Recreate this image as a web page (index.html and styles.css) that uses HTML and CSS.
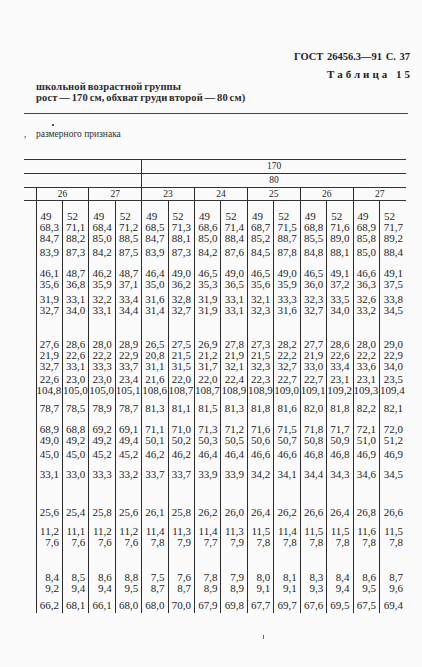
FILE: index.html
```html
<!DOCTYPE html>
<html lang="ru">
<head>
<meta charset="utf-8">
<title>ГОСТ 26456.3—91 С. 37</title>
<link rel="stylesheet" href="styles.css">
</head>
<body>
<div class="page">
  <div class="gost">ГОСТ 26456.3—91 С. 37</div>
  <div class="tabl">Таблица <b>15</b></div>
  <div class="title">школьной возрастной группы<br>рост — 170 см, обхват груди второй — 80 см)</div>
  <div class="rule"></div>
  <div class="specks"><span class="dot"></span></div>
  <div class="note"><span class="comma">,</span>размерного признака</div>
  <table class="data">
    <colgroup>
      <col class="stub"><col><col><col><col><col><col><col><col><col><col><col><col><col><col>
    </colgroup>
    <tr class="h h1"><td colspan="5" class="hl"></td><td colspan="10">170</td></tr>
    <tr class="h h2"><td colspan="5" class="hl"></td><td colspan="10">80</td></tr>
    <tr class="h h3"><td class="s"></td><td colspan="2" class="g">26</td><td colspan="2" class="g">27</td><td colspan="2" class="g">23</td><td colspan="2" class="g">24</td><td colspan="2" class="g">25</td><td colspan="2" class="g">26</td><td colspan="2" class="g">27</td></tr>
    <tr class="p10"><td class="s"></td>
      <td><span class="l">49</span>68,3<br>84,7</td><td><span class="l">52</span>71,1<br>88,2</td>
      <td><span class="l">49</span>68,4<br>85,0</td><td><span class="l">52</span>71,2<br>88,5</td>
      <td><span class="l">49</span>68,5<br>84,7</td><td><span class="l">52</span>71,3<br>88,1</td>
      <td><span class="l">49</span>68,6<br>85,0</td><td><span class="l">52</span>71,4<br>88,4</td>
      <td><span class="l">49</span>68,7<br>85,2</td><td><span class="l">52</span>71,5<br>88,7</td>
      <td><span class="l">49</span>68,8<br>85,5</td><td><span class="l">52</span>71,6<br>89,0</td>
      <td><span class="l">49</span>68,9<br>85,8</td><td><span class="l">52</span>71,7<br>89,2</td></tr>
    <tr class="p3"><td class="s"></td><td>83,9</td><td>87,3</td><td>84,2</td><td>87,5</td><td>83,9</td><td>87,3</td><td>84,2</td><td>87,6</td><td>84,5</td><td>87,8</td><td>84,8</td><td>88,1</td><td>85,0</td><td>88,4</td></tr>
    <tr class="p10"><td class="s"></td><td>46,1<br>35,6</td><td>48,7<br>36,8</td><td>46,2<br>35,9</td><td>48,7<br>37,1</td><td>46,4<br>35,0</td><td>49,0<br>36,2</td><td>46,5<br>35,3</td><td>49,0<br>36,5</td><td>46,5<br>35,6</td><td>49,0<br>35,9</td><td>46,5<br>36,0</td><td>49,1<br>37,2</td><td>46,6<br>36,3</td><td>49,1<br>37,5</td></tr>
    <tr class="p4"><td class="s"></td><td>31,9<br>32,7</td><td>33,1<br>34,0</td><td>32,2<br>33,1</td><td>33,4<br>34,4</td><td>31,6<br>31,4</td><td>32,8<br>32,7</td><td>31,9<br>31,9</td><td>33,1<br>33,1</td><td>32,1<br>32,3</td><td>33,3<br>31,6</td><td>32,3<br>32,7</td><td>33,5<br>34,0</td><td>32,6<br>33,2</td><td>33,8<br>34,5</td></tr>
    <tr class="p23"><td class="s"></td><td>27,6<br>21,9<br>32,7</td><td>28,6<br>22,6<br>33,1</td><td>28,0<br>22,2<br>33,3</td><td>28,9<br>22,9<br>33,7</td><td>26,5<br>20,8<br>31,1</td><td>27,5<br>21,5<br>31,5</td><td>26,9<br>21,2<br>31,7</td><td>27,8<br>21,9<br>32,1</td><td>27,3<br>21,5<br>32,3</td><td>28,2<br>22,2<br>32,7</td><td>27,7<br>21,9<br>33,0</td><td>28,6<br>22,6<br>33,4</td><td>28,0<br>22,2<br>33,6</td><td>29,0<br>22,9<br>34,0</td></tr>
    <tr class="p2"><td class="s"></td><td>22,6<br>104,8</td><td>23,0<br>105,0</td><td>23,0<br>105,0</td><td>23,4<br>105,1</td><td>21,6<br>108,6</td><td>22,0<br>108,7</td><td>22,0<br>108,7</td><td>22,4<br>108,9</td><td>22,3<br>108,9</td><td>22,7<br>109,0</td><td>22,7<br>109,1</td><td>23,1<br>109,2</td><td>23,1<br>109,3</td><td>23,5<br>109,4</td></tr>
    <tr class="p7"><td class="s"></td><td>78,7</td><td>78,5</td><td>78,9</td><td>78,7</td><td>81,3</td><td>81,1</td><td>81,5</td><td>81,3</td><td>81,8</td><td>81,6</td><td>82,0</td><td>81,8</td><td>82,2</td><td>82,1</td></tr>
    <tr class="p10"><td class="s"></td><td>68,9<br>49,0</td><td>68,8<br>49,2</td><td>69,2<br>49,2</td><td>69,1<br>49,4</td><td>71,1<br>50,1</td><td>71,0<br>50,2</td><td>71,3<br>50,3</td><td>71,2<br>50,5</td><td>71,6<br>50,6</td><td>71,5<br>50,7</td><td>71,8<br>50,8</td><td>71,7<br>50,9</td><td>72,1<br>51,0</td><td>72,0<br>51,2</td></tr>
    <tr class="p3"><td class="s"></td><td>45,0</td><td>45,0</td><td>45,2</td><td>45,2</td><td>46,2</td><td>46,2</td><td>46,4</td><td>46,4</td><td>46,6</td><td>46,6</td><td>46,8</td><td>46,8</td><td>46,9</td><td>46,9</td></tr>
    <tr class="p9"><td class="s"></td><td>33,1</td><td>33,0</td><td>33,3</td><td>33,2</td><td>33,7</td><td>33,7</td><td>33,9</td><td>33,9</td><td>34,2</td><td>34,1</td><td>34,4</td><td>34,3</td><td>34,6</td><td>34,5</td></tr>
    <tr class="p27"><td class="s"></td><td>25,6</td><td>25,4</td><td>25,8</td><td>25,6</td><td>26,1</td><td>25,8</td><td>26,2</td><td>26,0</td><td>26,4</td><td>26,2</td><td>26,6</td><td>26,4</td><td>26,8</td><td>26,6</td></tr>
    <tr class="p8"><td class="s"></td><td>11,2<br>7,6</td><td>11,1<br>7,6</td><td>11,2<br>7,6</td><td>11,2<br>7,6</td><td>11,4<br>7,8</td><td>11,3<br>7,9</td><td>11,4<br>7,7</td><td>11,3<br>7,9</td><td>11,5<br>7,8</td><td>11,4<br>7,8</td><td>11,5<br>7,8</td><td>11,5<br>7,8</td><td>11,6<br>7,8</td><td>11,5<br>7,8</td></tr>
    <tr class="p24"><td class="s"></td><td>8,4<br>9,2</td><td>8,5<br>9,4</td><td>8,6<br>9,4</td><td>8,8<br>9,5</td><td>7,5<br>8,7</td><td>7,6<br>8,7</td><td>7,8<br>8,9</td><td>7,9<br>8,9</td><td>8,0<br>9,1</td><td>8,1<br>9,1</td><td>8,3<br>9,3</td><td>8,4<br>9,4</td><td>8,6<br>9,5</td><td>8,7<br>9,6</td></tr>
    <tr class="p6 last"><td class="s"></td><td>66,2</td><td>68,1</td><td>66,1</td><td>68,0</td><td>68,0</td><td>70,0</td><td>67,9</td><td>69,8</td><td>67,7</td><td>69,7</td><td>67,6</td><td>69,5</td><td>67,5</td><td>69,4</td></tr>
  </table>
  <div class="foot"><span class="tick"></span></div>
</div>
</body>
</html>
```
FILE: styles.css
```css
html, body {
  margin: 0;
  padding: 0;
  background: #fbfbfb;
}
body {
  font-family: "Liberation Serif", "DejaVu Serif", serif;
  color: #1e1e1e;
}
.page {
  width: 422px;
  height: 667px;
  box-sizing: border-box;
  padding: 50px 14px 0 24px;
  overflow: hidden;
}
.gost {
  text-align: right;
  font-size: 10.5px;
  font-weight: bold;
  line-height: 14px;
  word-spacing: 1px;
  margin-right: -2px;
}
.tabl {
  margin-top: 3px;
  text-align: right;
  font-size: 11px;
  line-height: 14px;
  letter-spacing: 3px;
  margin-right: -5px;
  font-weight: 600;
}
.title {
  padding-left: 12px;
  font-size: 10.5px;
  font-weight: bold;
  line-height: 11px;
  letter-spacing: 0.15px;
  word-spacing: -1px;
  color: #2a2a2a;
}
.rule {
  margin-top: 10px;
  border-top: 1.5px solid #444;
}
.specks {
  height: 14px;
  position: relative;
}
.dot {
  position: absolute;
  left: 28px;
  top: 10px;
  width: 2px;
  height: 2px;
  background: #555;
}
.note {
  position: relative;
  padding-left: 12px;
  font-size: 9.5px;
  line-height: 12px;
  color: #2e2e2e;
}
.comma {
  position: absolute;
  left: 0;
  top: 0;
}
.data {
  margin-top: 19px;
  width: 382px;
  table-layout: fixed;
  border-collapse: collapse;
  font-size: 11px;
  line-height: 11px;
}
.data col.stub { width: 12px; }
.data td {
  padding: 0 3px 0 0;
  text-align: right;
  white-space: nowrap;
  border-left: 1px solid #2a2a2a;
  vertical-align: top;
  overflow: visible;
}
.data td.s { border-left: none; }
.data tr.h td {
  border-top: 1.5px solid #333;
  border-bottom: 1.5px solid #333;
  text-align: center;
  vertical-align: middle;
  font-size: 9.5px;
  padding: 0;
}
.data tr.h td.hl {
  border-left: none;
  border-right: 1px solid #333;
}
.data tr.h1 td { height: 13px; }
.data tr.h2 td { height: 13px; }
.data tr.h3 td { height: 12px; }
.data .l {
  display: block;
  text-align: left;
  padding-left: 4px;
}
.data tr.p2 td { padding-top: 2px; }
.data tr.p3 td { padding-top: 3px; }
.data tr.p4 td { padding-top: 4px; }
.data tr.p6 td { padding-top: 6px; }
.data tr.p7 td { padding-top: 7px; }
.data tr.p8 td { padding-top: 8px; }
.data tr.p9 td { padding-top: 9px; }
.data tr.p10 td { padding-top: 10px; }
.data tr.p23 td { padding-top: 23px; }
.data tr.p24 td { padding-top: 24px; }
.data tr.p27 td { padding-top: 27px; }
.data tr.last td { padding-bottom: 2px; }
.foot {
  position: relative;
  height: 30px;
}
.tick {
  position: absolute;
  left: 239px;
  top: 22px;
  width: 1px;
  height: 4px;
  background: #666;
}
```
